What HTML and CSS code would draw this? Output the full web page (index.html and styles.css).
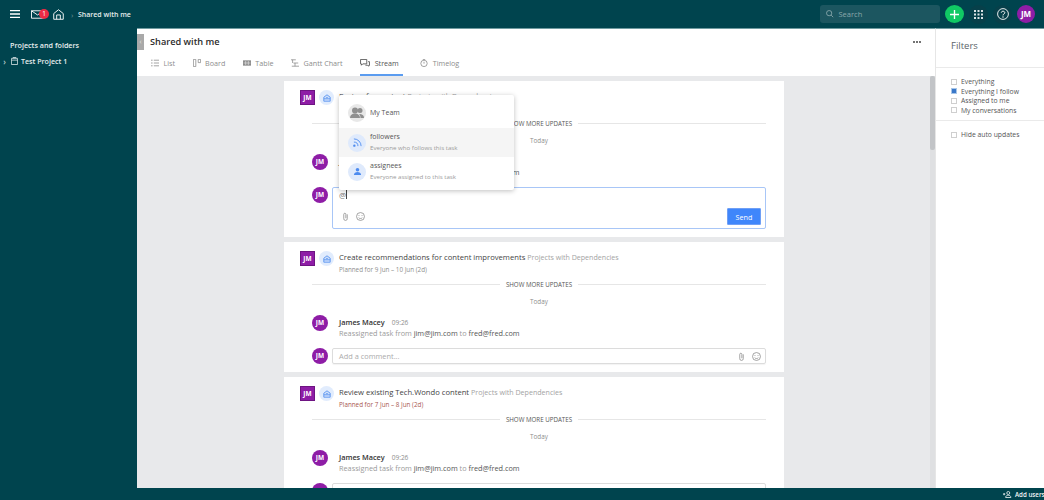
FILE: index.html
```html
<!DOCTYPE html>
<html lang="en">
<head>
<meta charset="utf-8">
<title>Shared with me</title>
<link rel="stylesheet" href="styles.css">
</head>
<body>
<header class="topbar">
  <svg class="ic burger" viewBox="0 0 10 8"><path d="M0 .7h10M0 4h10M0 7.300h10" stroke="#fff" stroke-width="1.300"/></svg>
  <div class="mail">
    <svg class="ic mail-ic" viewBox="0 0 14 9"><path d="M.5.5h13v8H.5zM.5.5 7 5l6.500-4.500" fill="none" stroke="#fff"/></svg>
    <span class="badge">1</span>
  </div>
  <svg class="ic home" viewBox="0 0 12 12"><path d="M.8 5 6 .8 11.200 5v6.200H.8zM4 11.200V6.500h4v4.700" fill="none" stroke="#fff"/></svg>
  <span class="crumb-sep">›</span>
  <span class="crumb">Shared with me</span>
  <div class="spacer"></div>
  <div class="search">
    <svg class="ic search-ic" viewBox="0 0 10 10"><circle cx="4.200" cy="4.200" r="3.500" fill="none" stroke="#9bb4b8"/><path d="m6.800 6.800 2.800 2.800" stroke="#9bb4b8"/></svg>
    <span>Search</span>
  </div>
  <div class="add"><svg viewBox="0 0 10 10" class="ic plus"><path d="M5 0v10M0 5h10" stroke="#fff" stroke-width="1.500"/></svg></div>
  <div class="round">
    <svg class="ic apps" viewBox="0 0 9 9" fill="#fff"><rect width="2" height="2"/><rect x="3.500" width="2" height="2"/><rect x="7" width="2" height="2"/><rect y="3.500" width="2" height="2"/><rect x="3.500" y="3.500" width="2" height="2"/><rect x="7" y="3.500" width="2" height="2"/><rect y="7" width="2" height="2"/><rect x="3.500" y="7" width="2" height="2"/><rect x="7" y="7" width="2" height="2"/></svg>
  </div>
  <div class="round">
    <svg class="ic help" viewBox="0 0 12 12"><circle cx="6" cy="6" r="5.400" fill="none" stroke="#fff" stroke-width=".9"/><path d="M4.300 4.700C4.300 2.700 7.800 2.800 7.800 4.700 7.800 6 6 5.900 6 7.400" fill="none" stroke="#fff"/><circle cx="6" cy="9" r=".7" fill="#fff"/></svg>
  </div>
  <div class="avatar top-avatar">JM</div>
</header>
<div class="body">
  <aside class="sidebar">
    <h2>Projects and folders</h2>
    <div class="tree-row">
      <span class="chev">›</span>
      <svg class="ic proj" viewBox="0 0 8 9"><path d="M.5 1.500h7v7h-7zM.5 3.500h7M2 .5h4" fill="none" stroke="#dfe8e9" stroke-width=".9"/></svg>
      <span>Test Project 1</span>
    </div>
  </aside>
  <main class="main">
    <div class="collapse">‹</div>
    <div class="head">
      <div class="title-row">
        <h1>Shared with me</h1>
        <svg class="ic dots" viewBox="0 0 8 2" fill="#444"><circle cx="1" cy="1" r="1"/><circle cx="4" cy="1" r="1"/><circle cx="7" cy="1" r="1"/></svg>
      </div>
      <nav class="tabs">
        <a class="tab"><svg class="ic t" viewBox="0 0 10 9"><path d="M0 1h2M0 4.500h2M0 8h2M3.500 1H10M3.500 4.500H10M3.500 8H10" stroke="#8d8d8d"/></svg>List</a>
        <a class="tab"><svg class="ic t" viewBox="0 0 10 10"><path d="M.5.500h3v9h-3zM6.500.500h3v4h-3z" fill="none" stroke="#8d8d8d"/></svg>Board</a>
        <a class="tab"><svg class="ic t wide" viewBox="0 0 12 8"><path d="M0 0h12v8H0z" fill="#8d8d8d"/><path d="M4 1v6M8 1v6M1 4h10" stroke="#fff" stroke-width=".7"/></svg>Table</a>
        <a class="tab"><svg class="ic t" viewBox="0 0 10 10"><path d="M0 1h6M3 5h6M1 9h9M2 1v4M5 5v4" stroke="#8d8d8d" fill="none"/></svg>Gantt Chart</a>
        <a class="tab active"><svg class="ic t stream-ic" viewBox="0 0 11 9"><path d="M.5.500h7v5H3L1.500 7V5.500h-1zM9 3h1.500v4H10v1L8 7H6" fill="none" stroke="#555"/></svg>Stream</a>
        <a class="tab"><svg class="ic t" viewBox="0 0 10 10"><circle cx="5" cy="5.500" r="4" fill="none" stroke="#8d8d8d"/><path d="M5 3.500v2.300M3.500.500h3" stroke="#8d8d8d"/></svg>Timelog</a>
      </nav>
    </div>
    <div class="stream">
      <div class="scroll-thumb"></div>
      <div class="column">
        <article class="card first">
          <div class="task-head">
            <div class="square">JM</div>
            <div class="task-ic"><svg class="ic box" viewBox="0 0 10 10"><path d="M1 4 5 1l4 3v5H1z" fill="#cfe0fb" stroke="#4d8bef"/><path d="M1 6h8M4 4.500h2" stroke="#4d8bef"/></svg></div>
            <div class="task-text">
              <div class="task-title">Review for content <span class="project">Projects with Dependencies</span></div>
              <div class="task-date">Planned for 9 Jun – 10 Jun (2d)</div>
            </div>
          </div>
          <div class="more-updates"><span>SHOW MORE UPDATES</span></div>
          <div class="today">Today</div>
          <div class="update">
            <div class="avatar">JM</div>
            <div>
              <div class="who"><b>James Macey</b><span>09:26</span></div>
              <div class="what">Reassigned task from <em>jim@jim.com</em> to <em>fred@fred.com</em></div>
            </div>
          </div>
          <div class="comment-row">
            <div class="avatar">JM</div>
            <div class="editor">
              <div class="typed">@<i class="caret"></i></div>
              <div class="editor-foot">
                <svg class="ic clip" viewBox="0 0 8 10"><path d="M6 2.500v5a2 2 0 0 1-4 0v-5a1.200 1.200 0 0 1 2.400 0v4.500" fill="none" stroke="#8d8d8d" stroke-width=".9"/></svg>
                <svg class="ic smile" viewBox="0 0 10 10"><circle cx="5" cy="5" r="4.400" fill="none" stroke="#8d8d8d" stroke-width=".9"/><path d="M3 6.300c1 1.300 3 1.300 4 0M3.300 3.500v1M6.700 3.500v1" fill="none" stroke="#8d8d8d" stroke-width=".9"/></svg>
                <div class="spacer"></div>
                <button class="send">Send</button>
              </div>
            </div>
          </div>
          <div class="popup">
            <div class="pop-row team">
              <div class="pop-ic grey"><svg class="ic people" viewBox="0 0 14 12" fill="#8f8f8f"><circle cx="5" cy="3.500" r="3"/><circle cx="10" cy="3.500" r="2.500"/><path d="M0 11c0-3 2-4.500 5-4.500S10 8 10 11zM10.500 11c0-2-.5-3-1.500-4 3 0 5 1 5 4z"/></svg></div>
              <div class="pop-name">My Team</div>
            </div>
            <div class="pop-row hot">
              <div class="pop-ic"><svg class="ic pop-svg" viewBox="0 0 10 10"><circle cx="1.500" cy="8.500" r="1.300" fill="#4d8bef"/><path d="M1 4.500a4.500 4.500 0 0 1 4.500 4.500M1 1a8 8 0 0 1 8 8" fill="none" stroke="#4d8bef"/></svg></div>
              <div><div class="pop-name">followers</div><div class="pop-sub">Everyone who follows this task</div></div>
            </div>
            <div class="pop-row">
              <div class="pop-ic"><svg class="ic pop-svg" viewBox="0 0 10 10" fill="#4d8bef"><circle cx="5" cy="3" r="2"/><path d="M1 9c0-2.500 2-3.500 4-3.500S9 6.500 9 9z"/></svg></div>
              <div><div class="pop-name">assignees</div><div class="pop-sub">Everyone assigned to this task</div></div>
            </div>
          </div>
        </article>
        <article class="card">
          <div class="task-head">
            <div class="square">JM</div>
            <div class="task-ic"><svg class="ic box" viewBox="0 0 10 10"><path d="M1 4 5 1l4 3v5H1z" fill="#cfe0fb" stroke="#4d8bef"/><path d="M1 6h8M4 4.500h2" stroke="#4d8bef"/></svg></div>
            <div class="task-text">
              <div class="task-title">Create recommendations for content improvements <span class="project">Projects with Dependencies</span></div>
              <div class="task-date">Planned for 9 Jun – 10 Jun (2d)</div>
            </div>
          </div>
          <div class="more-updates"><span>SHOW MORE UPDATES</span></div>
          <div class="today">Today</div>
          <div class="update">
            <div class="avatar">JM</div>
            <div>
              <div class="who"><b>James Macey</b><span>09:26</span></div>
              <div class="what">Reassigned task from <em>jim@jim.com</em> to <em>fred@fred.com</em></div>
            </div>
          </div>
          <div class="comment-row">
            <div class="avatar">JM</div>
            <div class="comment-box">
              <span>Add a comment...</span>
              <div class="spacer"></div>
              <svg class="ic clip" viewBox="0 0 8 10"><path d="M6 2.500v5a2 2 0 0 1-4 0v-5a1.200 1.200 0 0 1 2.400 0v4.500" fill="none" stroke="#8d8d8d" stroke-width=".9"/></svg>
              <svg class="ic smile" viewBox="0 0 10 10"><circle cx="5" cy="5" r="4.400" fill="none" stroke="#8d8d8d" stroke-width=".9"/><path d="M3 6.300c1 1.300 3 1.300 4 0M3.300 3.500v1M6.700 3.500v1" fill="none" stroke="#8d8d8d" stroke-width=".9"/></svg>
            </div>
          </div>
        </article>
        <article class="card">
          <div class="task-head">
            <div class="square">JM</div>
            <div class="task-ic"><svg class="ic box" viewBox="0 0 10 10"><path d="M1 4 5 1l4 3v5H1z" fill="#cfe0fb" stroke="#4d8bef"/><path d="M1 6h8M4 4.500h2" stroke="#4d8bef"/></svg></div>
            <div class="task-text">
              <div class="task-title">Review existing Tech.Wondo content <span class="project">Projects with Dependencies</span></div>
              <div class="task-date late">Planned for 7 Jun – 8 Jun (2d)</div>
            </div>
          </div>
          <div class="more-updates"><span>SHOW MORE UPDATES</span></div>
          <div class="today">Today</div>
          <div class="update">
            <div class="avatar">JM</div>
            <div>
              <div class="who"><b>James Macey</b><span>09:26</span></div>
              <div class="what">Reassigned task from <em>jim@jim.com</em> to <em>fred@fred.com</em></div>
            </div>
          </div>
          <div class="comment-row">
            <div class="avatar blank"></div>
            <div class="comment-box"></div>
          </div>
        </article>
      </div>
    </div>
  </main>
  <aside class="filters">
    <h3>Filters</h3>
    <div class="filter-group">
      <label class="check"><i class="box-ch"></i>Everything</label>
      <label class="check"><i class="box-ch on"></i>Everything I follow</label>
      <label class="check"><i class="box-ch"></i>Assigned to me</label>
      <label class="check"><i class="box-ch"></i>My conversations</label>
    </div>
    <div class="filter-group last">
      <label class="check"><i class="box-ch"></i>Hide auto updates</label>
    </div>
  </aside>
</div>
<footer class="footer">
  <svg class="ic add-user" viewBox="0 0 12 9"><circle cx="7" cy="2.500" r="2" fill="none" stroke="#fff"/><path d="M3.500 8.500c0-2 1.500-3 3.500-3s3.500 1 3.500 3zM0 4h3M1.500 2.500v3" fill="none" stroke="#fff"/></svg>
  <span>Add users</span>
</footer>
</body>
</html>
```

FILE: styles.css
```css
* { box-sizing: border-box; }
html, body { height: 100%; }
body {
  margin: 0;
  height: 500px;
  overflow: hidden;
  display: flex;
  flex-direction: column;
  background: #00444e;
  font-family: "Open Sans", "Noto Sans", sans-serif;
  color: #3f3f3f;
}
.ic { display: block; flex: none; }
.spacer { flex: 1; }

.topbar {
  height: 28px;
  flex: none;
  display: flex;
  align-items: center;
  background: #00444e;
  color: #fff;
  padding-left: 10px;
  padding-right: 9px;
  font-size: 8px;
}
.burger { width: 10px; height: 8px; }
.mail { position: relative; margin-left: 11px; width: 19px; height: 14px; display: flex; align-items: center; }
.mail-ic { width: 13px; height: 9px; }
.badge {
  position: absolute;
  left: 8px;
  top: 2px;
  width: 10px;
  height: 10px;
  border-radius: 50%;
  background: #ed2b45;
  color: #fff;
  font-size: 6.500px;
  line-height: 10px;
  text-align: center;
}
.home { width: 11px; height: 11px; margin-left: 3px; }
.crumb-sep { margin-left: 7px; color: #6f9298; font-size: 8px; }
.crumb { margin-left: 4.500px; font-size: 7px; font-weight: 600; color: #e4ecec; }
.search {
  width: 120px;
  height: 18px;
  border-radius: 3px;
  background: #1c5660;
  display: flex;
  align-items: center;
  gap: 5px;
  padding-left: 6px;
  color: #8aa6aa;
  font-size: 7.500px;
}
.search-ic { width: 7.500px; height: 7.500px; }
.add {
  width: 19px;
  height: 18px;
  margin-left: 5px;
  border-radius: 50%;
  background: #10c964;
  display: flex;
  align-items: center;
  justify-content: center;
}
.plus { width: 9px; height: 9px; }
.round {
  width: 19px;
  height: 19px;
  margin-left: 5px;
  border-radius: 50%;
  background: #07404a;
  display: flex;
  align-items: center;
  justify-content: center;
}
.apps { width: 9px; height: 9px; opacity: .85; }
.help { width: 12px; height: 12px; }
.avatar {
  width: 16px;
  height: 16px;
  flex: none;
  border-radius: 50%;
  background: #8e1da6;
  color: #fff;
  font-size: 6.500px;
  font-weight: 700;
  line-height: 16px;
  text-align: center;
}
.top-avatar { width: 18px; height: 18px; line-height: 18px; margin-left: 5px; font-size: 8px; }

.body { flex: 1; min-height: 0; display: flex; }
.sidebar { width: 137px; flex: none; color: #e8eeef; padding: 12px 0 0 0; }
.sidebar h2 { margin: 0 0 0 10px; font-size: 7.200px; font-weight: 600; line-height: 11px; }
.tree-row { display: flex; align-items: center; margin-top: 5px; font-size: 7.100px; font-weight: 600; height: 10px; }
.chev { width: 8px; text-align: right; color: #b8c8ca; font-size: 8px; padding-right: 2px; }
.proj { width: 7px; height: 8px; margin-left: 3px; margin-right: 3px; }

.main {
  width: 798px;
  flex: none;
  display: flex;
  flex-direction: column;
  position: relative;
  background: #fff;
  min-width: 0;
  border-top: 1px solid #6f9ba0;
}
.collapse {
  position: absolute;
  left: 0;
  top: 5px;
  width: 7px;
  height: 16px;
  background: #a9a9a9;
  color: #e3e3e3;
  font-size: 7px;
  line-height: 16px;
  text-align: center;
}
.head { height: 47px; flex: none; padding-left: 13px; display: flex; flex-direction: column; }
.title-row { display: flex; align-items: center; height: 25px; padding-right: 14px; justify-content: space-between; }
.title-row h1 { margin: 0; font-size: 9.200px; font-weight: 600; color: #2b2b2b; }
.dots { width: 8px; height: 2px; }
.tabs { display: flex; height: 22px; padding-left: 1px; }
.tab {
  display: flex;
  align-items: center;
  gap: 4.500px;
  margin-right: 17.500px;
  height: 22px;
  padding-bottom: 2px;
  font-size: 7.200px;
  color: #8d8d8d;
  border-bottom: 2px solid transparent;
}
.t { width: 8px; height: 8px; }
.t.wide { width: 8px; height: 6px; }
.t.stream-ic { width: 10px; }
.tab.active { color: #555; border-bottom-color: #5b9cf0; padding-right: 4px; }

.stream { flex: 1; min-height: 0; position: relative; overflow: hidden; background: #e8e9eb; }
.scroll-thumb {
  position: absolute;
  right: 0;
  top: 0;
  bottom: 0;
  width: 5px;
  background: #dfe0e2;
}
.scroll-thumb::before {
  content: "";
  position: absolute;
  left: 0;
  top: 0;
  width: 5px;
  height: 74px;
  background: #c2c4c7;
  border-radius: 2px;
}
.column { width: 500px; margin-left: 147px; padding-top: 5px; display: flex; flex-direction: column; gap: 5px; }
.card { background: #fff; padding: 9px 18px 0 15px; position: relative; flex: none; height: 130px; }
.card.first { height: 156px; }
.task-head { display: flex; align-items: flex-start; height: 26px; }
.square {
  width: 15px;
  height: 15px;
  margin-left: 1px;
  background: #8e1da6;
  border: 1px solid #6e1482;
  color: #fff;
  font-size: 6.500px;
  font-weight: 700;
  line-height: 13px;
  text-align: center;
  flex: none;
}
.task-ic {
  width: 15px;
  height: 15px;
  margin-left: 4px;
  border-radius: 50%;
  background: #e1ecfd;
  display: flex;
  align-items: center;
  justify-content: center;
  flex: none;
}
.box { width: 8px; height: 8px; }
.task-text { margin-left: 5px; }
.task-title { font-size: 7.650px; line-height: 12px; color: #444; white-space: nowrap; }
.project { font-size: 7.100px; color: #a3a3a3; }
.task-date { font-size: 6.300px; line-height: 11px; margin-top: 1px; color: #8d8d8d; }
.task-date.late { color: #a8574f; }
.more-updates { display: flex; align-items: center; margin-left: 13px; font-size: 6.200px; color: #555; height: 10px; margin-top: 2px; }
.more-updates::before, .more-updates::after { content: ""; flex: 1; border-top: 1px solid #e6e6e6; }
.more-updates span { margin: 0 6px; }
.today { text-align: center; font-size: 6.300px; color: #8d8d8d; margin-top: 8px; height: 9px; line-height: 9px; margin-left: 13px; }
.update { display: flex; gap: 11px; margin-top: 10px; margin-left: 13px; align-items: flex-start; height: 26px; }
.update .avatar { margin-top: -1px; }
.who { display: flex; gap: 7px; align-items: baseline; font-size: 7.300px; line-height: 11px; margin-top: 1px; color: #333; }
.who b { font-weight: 600; }
.who span { font-size: 6.500px; color: #8d8d8d; }
.what { font-size: 7.300px; line-height: 11px; color: #9a9a9a; white-space: nowrap; }
.what em { font-style: normal; color: #555; }
.comment-row { display: flex; gap: 4px; margin: 6px 0 0 13px; align-items: flex-start; }
.comment-box {
  flex: 1;
  height: 16px;
  border: 1px solid #dcdcdc;
  border-radius: 2px;
  box-shadow: 0 1px 1px rgba(0,0,0,.05);
  display: flex;
  align-items: center;
  gap: 7px;
  padding: 0 4px 0 6px;
  font-size: 7.400px;
  color: #ababab;
}
.clip { width: 7px; height: 9px; }
.smile { width: 9px; height: 9px; }
.editor {
  flex: 1;
  height: 42px;
  border: 1px solid #a8c6f7;
  border-radius: 2px;
  padding: 1px 4px 3px 6px;
  display: flex;
  flex-direction: column;
}
.typed { font-size: 8px; line-height: 11px; color: #777; display: flex; align-items: center; }
.caret { display: block; width: 1px; height: 9px; background: #444; }
.editor-foot { margin-top: auto; display: flex; align-items: center; gap: 7px; padding-left: 3px; }
.send {
  width: 34px;
  height: 17px;
  border: 1px solid #6f9ff5;
  border-radius: 1px;
  background: #3f86fb;
  color: #fff;
  font-family: inherit;
  font-size: 7.200px;
  padding: 0;
}
.popup {
  position: absolute;
  left: 55px;
  top: 14px;
  width: 175px;
  height: 95px;
  background: #fff;
  box-shadow: 0 1px 5px rgba(0,0,0,.25);
  border-radius: 2px;
}
.pop-row { height: 29px; display: flex; align-items: center; gap: 4px; padding-left: 9px; }
.pop-row.team { height: 33px; padding-top: 3px; }
.pop-row.hot { background: #f5f5f5; }
.pop-ic {
  width: 18px;
  height: 18px;
  border-radius: 50%;
  background: #dfeafc;
  display: flex;
  align-items: center;
  justify-content: center;
  flex: none;
}
.pop-ic.grey { background: #e8e8e8; }
.people { width: 14px; height: 12px; }
.pop-svg { width: 9px; height: 9px; }
.pop-name { font-size: 7px; line-height: 10px; color: #555; }
.pop-sub { font-size: 6.150px; line-height: 10px; margin-top: 1px; color: #9a9a9a; }

.filters { flex: 1; background: #fff; border-left: 1px solid #e6e6e6; border-top: 1px solid #6f9ba0; min-width: 0; }
.filters h3 { margin: 0; padding: 11px 0 0 15px; font-size: 9.500px; font-weight: 400; color: #5a6468; border-bottom: 1px solid #eaeaea; line-height: 12px; height: 39px; }
.filter-group { padding: 9px 0 5px 15px; border-bottom: 1px solid #eaeaea; display: flex; flex-direction: column; }
.filter-group.last { border-bottom: 0; padding-top: 9px; }
.check { display: flex; align-items: center; gap: 4px; height: 9.500px; font-size: 6.800px; color: #555; white-space: nowrap; }
.box-ch { display: block; width: 6px; height: 6px; border: 1px solid #cfcfcf; background: #fff; flex: none; }
.box-ch.on { background: #3a78c9; border-color: #a8c6e8; }

.footer {
  height: 12px;
  flex: none;
  background: #00444e;
  color: #f2f6f6;
  font-size: 6.200px;
  font-weight: 600;
  display: flex;
  align-items: center;
  justify-content: flex-end;
  gap: 3px;
}
.add-user { width: 9px; height: 7px; }
.footer span { white-space: nowrap; width: 29px; }
```
